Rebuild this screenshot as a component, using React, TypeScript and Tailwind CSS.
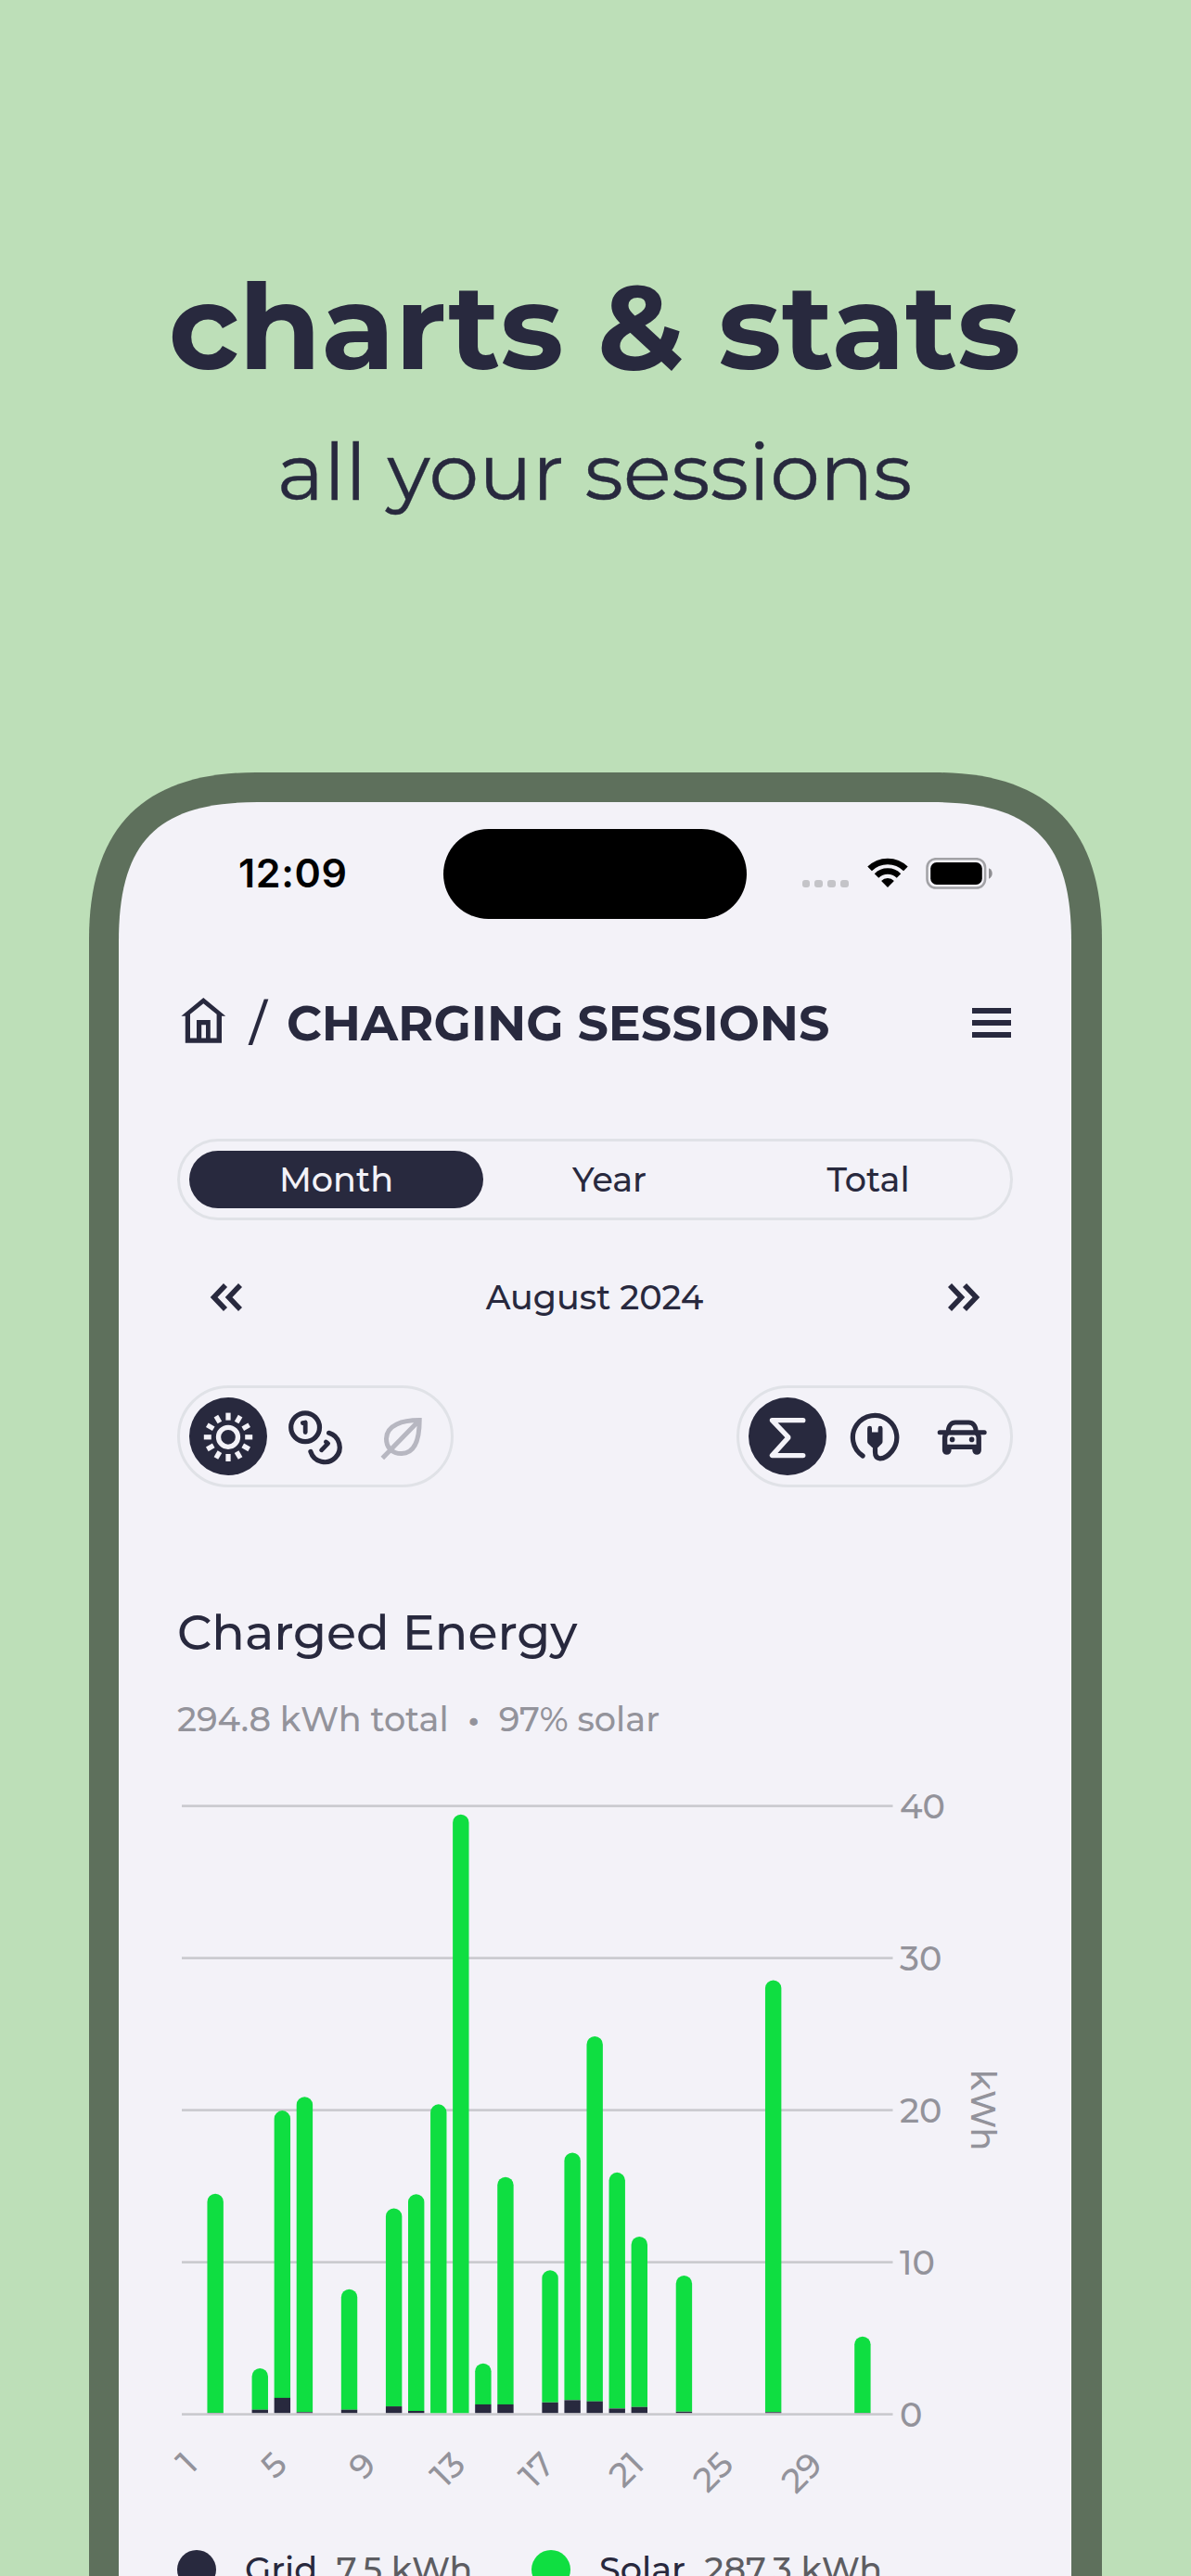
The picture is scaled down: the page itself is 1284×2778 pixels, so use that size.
import React from "react";

type Session = { day: number; total: number; grid: number };

const sessions: Session[] = [
  { day: 2, total: 14.5, grid: 0.1 },
  { day: 4, total: 3.02, grid: 0.3 },
  { day: 5, total: 19.97, grid: 1.08 },
  { day: 6, total: 20.88, grid: 0.14 },
  { day: 8, total: 8.22, grid: 0.3 },
  { day: 10, total: 13.55, grid: 0.52 },
  { day: 11, total: 14.48, grid: 0.22 },
  { day: 12, total: 20.38, grid: 0 },
  { day: 13, total: 39.44, grid: 0 },
  { day: 14, total: 3.35, grid: 0.65 },
  { day: 15, total: 15.6, grid: 0.65 },
  { day: 17, total: 9.48, grid: 0.78 },
  { day: 18, total: 17.2, grid: 0.93 },
  { day: 19, total: 24.85, grid: 0.85 },
  { day: 20, total: 15.9, grid: 0.38 },
  { day: 21, total: 11.68, grid: 0.48 },
  { day: 23, total: 9.12, grid: 0.17 },
  { day: 27, total: 28.55, grid: 0.14 },
  { day: 31, total: 5.12, grid: 0.1 },
];

const BASE = 703.6;
const PER_KWH = 16.4;
const BAR_W = 17.4;
const dayX = (day: number) => 17.1 + (day - 1) * 24.06;
const valueY = (v: number) => BASE - v * PER_KWH;

function EnergyChart() {
  const bottom = BASE - 1.4;
  return (
    <svg viewBox="0 0 901 820" className="block h-[820px] w-[901px] overflow-visible">
      {[0, 10, 20, 30, 40].map((v) => (
        <g key={v}>
          <rect x={5} y={valueY(v) - 1.3} width={766.5} height={2.6} className="fill-[#c9c9ce]" />
          <text x={779} y={valueY(v) + 13.2} className="fill-[#93939b] text-[36.6px] font-medium">
            {v}
          </text>
        </g>
      ))}
      {sessions.map(({ day, total, grid }) => {
        const x = dayX(day) - BAR_W / 2;
        const top = valueY(total);
        const r = BAR_W / 2;
        const split = Math.min(valueY(grid), bottom);
        return (
          <g key={day}>
            <path
              d={`M${x} ${split}V${top + r}a${r} ${r} 0 0 1 ${BAR_W} 0V${split}Z`}
              className="fill-[#0fde41]"
            />
            <rect x={x} y={split} width={BAR_W} height={bottom - split} className="fill-[#28293e]" />
          </g>
        );
      })}
      {[1, 5, 9, 13, 17, 21, 25, 29].map((d) => (
        <text
          key={d}
          textAnchor="end"
          transform={`translate(${dayX(d) + 7} 760) rotate(-45)`}
          className="fill-[#93939b] text-[36.6px] font-medium"
        >
          {d}
        </text>
      ))}
      <text
        textAnchor="middle"
        transform={`translate(856 ${valueY(20)}) rotate(90)`}
        className="fill-[#93939b] text-[36.6px] font-medium"
      >
        kWh
      </text>
    </svg>
  );
}

function WifiIcon() {
  return (
    <svg viewBox="0 0 46 33" className="h-[33px] w-[46px]" fill="none" stroke="black">
      <path d="M3.6 11.9A27.6 27.6 0 0 1 42.4 11.9" strokeWidth="6.6" />
      <path d="M11 19.4A17 17 0 0 1 35 19.4" strokeWidth="6.4" />
      <path d="M16.1 24.9A9.8 9.8 0 0 1 29.9 24.9L23 32Z" fill="black" stroke="none" />
    </svg>
  );
}

function BatteryIcon() {
  return (
    <svg viewBox="0 0 73 34" className="h-[34px] w-[73px]">
      <rect x="1.5" y="1.2" width="62.6" height="31.4" rx="9.5" fill="none" stroke="#a2a2a6" strokeWidth="2.5" />
      <rect x="5.2" y="5" width="55.6" height="24" rx="6.5" fill="black" />
      <path d="M68 11.3V22.7C70.5 21.6 71.7 19.5 71.7 17S70.5 12.4 68 11.3Z" fill="#8e8e92" />
    </svg>
  );
}

function StatusBar() {
  return (
    <div className="mt-[29px] grid h-[97px] shrink-0 grid-cols-[350px_327px_351px]">
      <div className="flex items-center pb-[2px] pl-[129px] font-['Inter',sans-serif] text-[43px] leading-none font-semibold tracking-[0.6px] text-black">
        12:09
      </div>
      <div className="rounded-full bg-black" />
      <div className="flex items-center pb-[2px] pl-[59.6px]">
        <div className="mt-[23px] flex gap-[5.1px]">
          <i className="size-[8.8px] rounded-[3px] bg-[#c4c4c8]" />
          <i className="size-[8.8px] rounded-[3px] bg-[#c4c4c8]" />
          <i className="size-[8.8px] rounded-[3px] bg-[#c4c4c8]" />
          <i className="size-[8.8px] rounded-[3px] bg-[#c4c4c8]" />
        </div>
        <div className="ml-[19px]">
          <WifiIcon />
        </div>
        <div className="ml-[18px]">
          <BatteryIcon />
        </div>
      </div>
    </div>
  );
}

function HomeIcon() {
  return (
    <svg viewBox="0 0 49 49" className="size-[49px]" fill="currentColor" fillRule="evenodd">
      <path d="M24.3 0L48.2 19.7H44V48.7H4.8V19.7H.4ZM10 43.5H17V24H31.8V43.5H38.6V17.8L24.3 6.3L10 17.8ZM22.2 29.2V43.5H27V29.2Z" />
    </svg>
  );
}

function Chevrons({ flip = false }: { flip?: boolean }) {
  return (
    <svg
      viewBox="0 0 35 30"
      className={flip ? "h-[30px] w-[35px] -scale-x-100" : "h-[30px] w-[35px]"}
      fill="none"
      stroke="currentColor"
      strokeWidth="5.6"
    >
      <path d="M17 2L4.6 15L17 28M33 2L20.6 15L33 28" />
    </svg>
  );
}

const iconBox = "size-[84px] shrink-0";

function SunIcon() {
  return (
    <svg viewBox="0 0 84 84" className={iconBox} fill="none" stroke="currentColor" strokeWidth="5.3">
      <circle cx="42" cy="42.8" r="10.5" />
      {Array.from({ length: 12 }, (_, i) => (
        <path key={i} d="M42 16.6V24.6" transform={`rotate(${i * 30} 42 42.8)`} />
      ))}
    </svg>
  );
}

function CoinsIcon() {
  return (
    <svg
      viewBox="0 0 84 84"
      className={iconBox}
      fill="none"
      stroke="currentColor"
      strokeWidth="5.2"
      strokeLinecap="round"
      strokeLinejoin="round"
    >
      <circle cx="31.1" cy="32.3" r="15.4" />
      <path d="M56.6 38.3A16 16 0 1 1 36.9 58.4" />
      <path d="M28.4 27.6L31.2 27V37.6M53.4 48L55.6 49.6L48.6 56.8" strokeWidth="4.8" />
    </svg>
  );
}

function LeafIcon() {
  return (
    <svg viewBox="0 0 84 84" className={iconBox} fill="none" stroke="currentColor" strokeWidth="5">
      <path d="M60.2 24.6C42 24.6 24.8 29.5 24.5 44.5C24.3 54 31 60.8 41 60.6C56 60.3 60.2 43 60.2 24.6ZM60.2 24.6L20.3 65.4" />
    </svg>
  );
}

function SumIcon() {
  return (
    <svg
      viewBox="0 0 84 84"
      className={iconBox}
      fill="none"
      stroke="currentColor"
      strokeWidth="5.3"
      strokeLinecap="round"
      strokeLinejoin="round"
    >
      <path d="M58.8 24.7H25.4L42.8 42.8V43.4L25.4 62.6H58.8" />
    </svg>
  );
}

function PlugIcon() {
  return (
    <svg viewBox="0 0 84 84" className={iconBox} fill="none" stroke="currentColor" strokeWidth="5.2" strokeLinecap="round">
      <path d="M29.1 63A23.7 23.7 0 1 1 60.6 58C57 62.5 52 66 47.6 65.8C44 65.5 42.5 62.5 42.5 59V52" />
      <path
        d="M34.1 33.2a2.4 2.4 0 0 1 4.9 0V37.6H45.6V33.2a2.4 2.4 0 0 1 4.9 0V47.5Q50.5 49 49.5 50L45.5 54H39.3L35.1 50Q34.1 49 34.1 47.5Z"
        fill="currentColor"
        stroke="none"
      />
    </svg>
  );
}

function CarIcon() {
  return (
    <svg viewBox="0 0 84 84" className={iconBox} fill="currentColor">
      <path
        d="M27.2 37C27.4 30 31 26.9 35 26.9H49.3C53.4 26.9 57 30 57.2 37M18.2 37.7H66.2"
        fill="none"
        stroke="currentColor"
        strokeWidth="5"
        strokeLinecap="round"
      />
      <path
        fillRule="evenodd"
        d="M24 37H60Q62.9 39 62.9 43V57A4.8 4.8 0 0 1 53.3 57V56H30.6V57A4.8 4.8 0 0 1 20.9 57V43Q21 39 24 37ZM28 40.6Q26.3 41.5 26.3 43.5V50.7H57.5V43.5Q57.5 41.5 56 40.6Z"
      />
      <circle cx="31.6" cy="45.4" r="2.8" />
      <circle cx="52.6" cy="45.4" r="2.8" />
    </svg>
  );
}

function IconGroup({ children }: { children: React.ReactNode }) {
  return (
    <div className="flex h-[110px] items-center gap-[10.2px] rounded-full border-[3px] border-[#e0e2e7] px-[9.8px]">
      {children}
    </div>
  );
}

function Active({ children }: { children: React.ReactNode }) {
  return <div className="rounded-full bg-[#28293e] text-[#f3f2f8]">{children}</div>;
}

function LegendItem({ dot, label, value }: { dot: string; label: string; value: string }) {
  return (
    <div className="flex items-center">
      <i className={dot} />
      <span className="ml-[31px]">{label}</span>
      <span className="ml-[20.5px] text-[#5d5d62]">{value}</span>
    </div>
  );
}

export default function App() {
  return (
    <div className="flex h-[2778px] w-[1284px] flex-col items-center overflow-hidden bg-[#bddfb8] font-['Montserrat','Inter',sans-serif] text-[#28293e]">
      <h1 className="mt-[277px] mr-[2px] text-[128.8px] leading-[150px] font-bold">charts &amp; stats</h1>
      <p className="mt-[31px] mr-[2px] text-[85.5px] leading-[100px] [-webkit-text-stroke:0.4px_currentColor]">
        all your sessions
      </p>

      <div className="mt-[275px] h-[1945px] w-[1092px] shrink-0 bg-[#5e705c] px-8 pt-8 [clip-path:path('M0_1945V180C0_59_59_0_180_0H912C1033_0_1092_59_1092_180V1945Z')]">
        <div className="flex h-[1913px] flex-col overflow-hidden bg-[#f3f2f8] [clip-path:path('M0_1913V150C0_42_42_0_150_0H877C985_0_1027_42_1027_150V1913Z')]">
          <StatusBar />

          <div className="flex flex-col pr-[64px] pl-[63px] text-[36.6px] leading-[40px] font-medium">
            <header className="mt-[82px] flex h-[60px] items-center">
              <div className="ml-[4px] pb-[5px]">
                <HomeIcon />
              </div>
              <span className="ml-[25px] text-[52.3px] leading-[60px]">/</span>
              <h2 className="ml-[21.5px] text-[52.3px] leading-[60px] font-bold">CHARGING SESSIONS</h2>
              <div className="mr-[2px] ml-auto flex flex-col gap-[7.8px]">
                <i className="h-[5.4px] w-[42px] bg-current" />
                <i className="h-[5.4px] w-[42px] bg-current" />
                <i className="h-[5.4px] w-[42px] bg-current" />
              </div>
            </header>

            <div className="mt-[95px] flex h-[88px] items-center rounded-full border-[3px] border-[#e0e2e7] px-[10px]">
              <div className="flex h-[62px] w-[317px] items-center justify-center rounded-full bg-[#28293e] text-[#f3f2f8]">
                Month
              </div>
              <div className="w-[272px] text-center">Year</div>
              <div className="w-[286px] text-center">Total</div>
            </div>

            <div className="mt-[63px] flex h-[40px] items-center justify-between px-[35px]">
              <Chevrons />
              <span className="pr-px">August 2024</span>
              <Chevrons flip />
            </div>

            <div className="mt-[75px] flex justify-between">
              <IconGroup>
                <Active>
                  <SunIcon />
                </Active>
                <CoinsIcon />
                <div className="text-[#b7b7c1]">
                  <LeafIcon />
                </div>
              </IconGroup>
              <IconGroup>
                <Active>
                  <SumIcon />
                </Active>
                <PlugIcon />
                <CarIcon />
              </IconGroup>
            </div>

            <h3 className="mt-[126px] text-[52.3px] leading-[60px]">Charged Energy</h3>
            <p className="mt-[42px] flex leading-[44px] text-[#93939b]">
              <span>294.8 kWh total</span>
              <span className="w-[54px] text-center font-extrabold">·</span>
              <span>97% solar</span>
            </p>

            <div className="mt-[24px]">
              <EnergyChart />
            </div>

            <div className="mt-[30px] flex h-[42px] items-center gap-[63.5px] whitespace-nowrap">
              <LegendItem dot="size-[42px] rounded-full bg-[#28293e]" label="Grid" value="7.5 kWh" />
              <LegendItem dot="size-[42px] rounded-full bg-[#0fde41]" label="Solar" value="287.3 kWh" />
            </div>
          </div>
        </div>
      </div>
    </div>
  );
}
